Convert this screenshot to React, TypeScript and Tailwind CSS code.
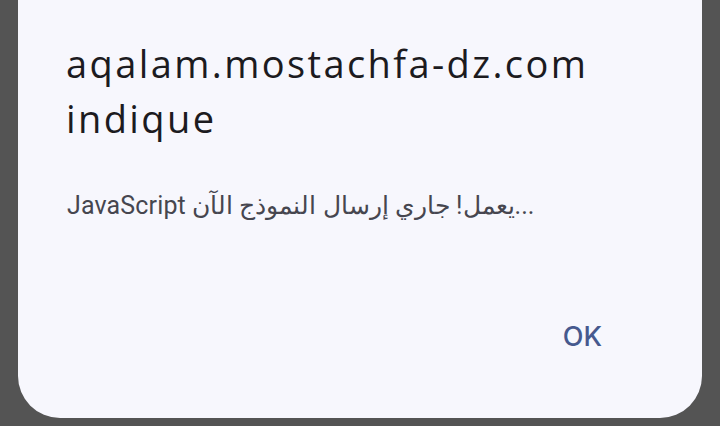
export default function App() {
  return (
    <div className="w-[720px] h-[426px] bg-[#545454] px-[18px] overflow-hidden">
      {/* Dialog (top edge runs off screen) */}
      <div className="h-[418px] bg-[#f7f7fd] rounded-b-[42px] flex flex-col font-['Roboto',sans-serif]">
        <h1 className="pt-[36px] pl-[48px] font-['Open_Sans',sans-serif] text-[38px] leading-[55px] tracking-[2.4px] text-[#1c1b1f] font-normal">
          aqalam.mostachfa-dz.com
          <br />
          indique
        </h1>
        <p className="mt-[44px] pl-[49px] text-[25px] leading-[32px] tracking-[0.15px] text-[#46464f]">
          JavaScript يعمل! جاري إرسال النموذج الآن...
        </p>
        <div className="mt-auto mb-[62px] flex justify-end pr-[76px]">
          <button className="px-[24px] font-['Inter',sans-serif] text-[27px] leading-[38px] font-medium text-[#46598e]">
            OK
          </button>
        </div>
      </div>
    </div>
  );
}
